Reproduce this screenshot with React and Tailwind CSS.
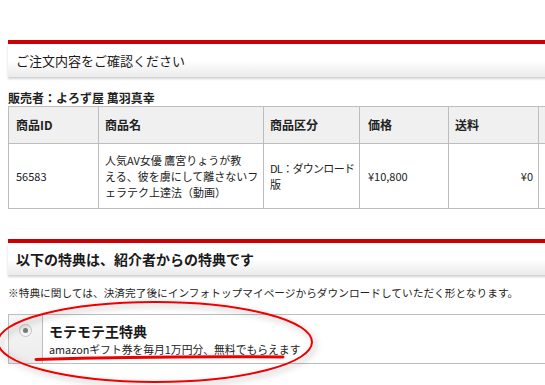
import React from 'react';

const font = { fontFamily: '"Noto Sans CJK JP", "Liberation Sans", sans-serif' };

function SectionHeader({ children, bold, h }) {
  return (
    <div>
      <div className="h-[4px] bg-[#cc0000]" />
      <div
        className={`${h} flex items-center pl-2 bg-gradient-to-b from-white from-50% to-[#ebebeb] shadow-[0_2px_2px_rgba(0,0,0,0.18)] text-[#1a1a1a] ${bold ? 'text-[14px] font-bold' : 'text-[13px]'}`}
      >
        {children}
      </div>
    </div>
  );
}

export default function App() {
  return (
    <div className="relative w-[545px] h-[385px] overflow-hidden bg-white text-[#222]" style={font}>
      <div className="w-[760px] pl-2 pt-[40px]">
        {/* order confirmation */}
        <SectionHeader h="h-[33px]">ご注文内容をご確認ください</SectionHeader>

        <div className="mt-[13px] h-[16px] leading-[16px] text-[12px] font-bold">販売者：よろず屋 萬羽真幸</div>

        <table className="w-[650px] table-fixed border-collapse text-[11px]">
          <colgroup>
            <col className="w-[90px]" />
            <col className="w-[165px]" />
            <col className="w-[96px]" />
            <col className="w-[89px]" />
            <col className="w-[90px]" />
            <col className="w-[120px]" />
          </colgroup>
          <thead>
            <tr className="bg-[#f0f0f0] h-[37px]">
              <th className="border border-[#bdbdbd] text-left font-bold text-[12px] px-[7px]">商品ID</th>
              <th className="border border-[#bdbdbd] text-left font-bold text-[12px] px-[6px]">商品名</th>
              <th className="border border-[#bdbdbd] text-left font-bold text-[12px] px-[6px]">商品区分</th>
              <th className="border border-[#bdbdbd] text-left font-bold text-[12px] px-[8px]">価格</th>
              <th className="border border-[#bdbdbd] text-left font-bold text-[12px] px-[6px]">送料</th>
              <th className="border border-[#bdbdbd]" />
            </tr>
          </thead>
          <tbody>
            <tr className="h-[65px] leading-[16px]">
              <td className="border border-[#bdbdbd] px-[7px]">56583</td>
              <td className="border border-[#bdbdbd] px-[6px] whitespace-nowrap overflow-hidden">
                人気AV女優 鷹宮りょうが教<br />える、彼を虜にして離さないフ<br />ェラテク上達法（動画）
              </td>
              <td className="border border-[#bdbdbd] px-[6px] whitespace-nowrap tracking-[-0.7px]">
                DL：ダウンロード<br />版
              </td>
              <td className="border border-[#bdbdbd] px-[8px]">¥10,800</td>
              <td className="border border-[#bdbdbd] px-[5px] text-right">¥0</td>
              <td className="border border-[#bdbdbd]" />
            </tr>
          </tbody>
        </table>

        {/* referral bonus */}
        <div className="mt-[30px]">
          <SectionHeader h="h-[32px]" bold>以下の特典は、紹介者からの特典です</SectionHeader>
        </div>

        <div className="mt-[10px] h-[16px] leading-[16px] text-[10.7px] whitespace-nowrap">
          ※特典に関しては、決済完了後にインフォトップマイページからダウンロードしていただく形となります。
        </div>

        <div className="mt-[13px] flex h-[50px] border border-[#bdbdbd]">
          <div className="w-[34px] shrink-0 border-r border-[#bdbdbd] bg-gradient-to-b from-[#f6f6f6] to-[#ececec] flex justify-center pt-[9px]">
            <span className="w-[13px] h-[13px] rounded-full border border-[#c4c4c4] bg-gradient-to-b from-[#e8e8e8] to-[#f8f8f8] flex items-center justify-center">
              <span className="w-[5px] h-[5px] rounded-full bg-[#7a7a7a]" />
            </span>
          </div>
          <div className="pl-[6px] pt-[6px]">
            <div className="h-[20px] leading-[20px] text-[14px] font-bold text-[#1a1a1a]">モテモテ王特典</div>
            <div className="h-[16px] leading-[16px] text-[10.8px] whitespace-nowrap">amazonギフト券を毎月1万円分、無料でもらえます</div>
          </div>
        </div>
      </div>

      {/* hand-drawn markup */}
      <svg className="absolute left-0 top-0 pointer-events-none" width="545" height="385" viewBox="0 0 545 385">
        <defs>
          <filter id="sh" x="-10%" y="-30%" width="130%" height="160%">
            <feDropShadow dx="3" dy="3" stdDeviation="3" floodColor="#000" floodOpacity="0.3" />
          </filter>
        </defs>
        <ellipse cx="155" cy="342" rx="157" ry="40" fill="none" stroke="#ee0000" strokeWidth="2" filter="url(#sh)" />
        <path d="M36 359.5 Q150 356 283 357" fill="none" stroke="#ee0000" strokeWidth="3" strokeLinecap="round" />
      </svg>
    </div>
  );
}
